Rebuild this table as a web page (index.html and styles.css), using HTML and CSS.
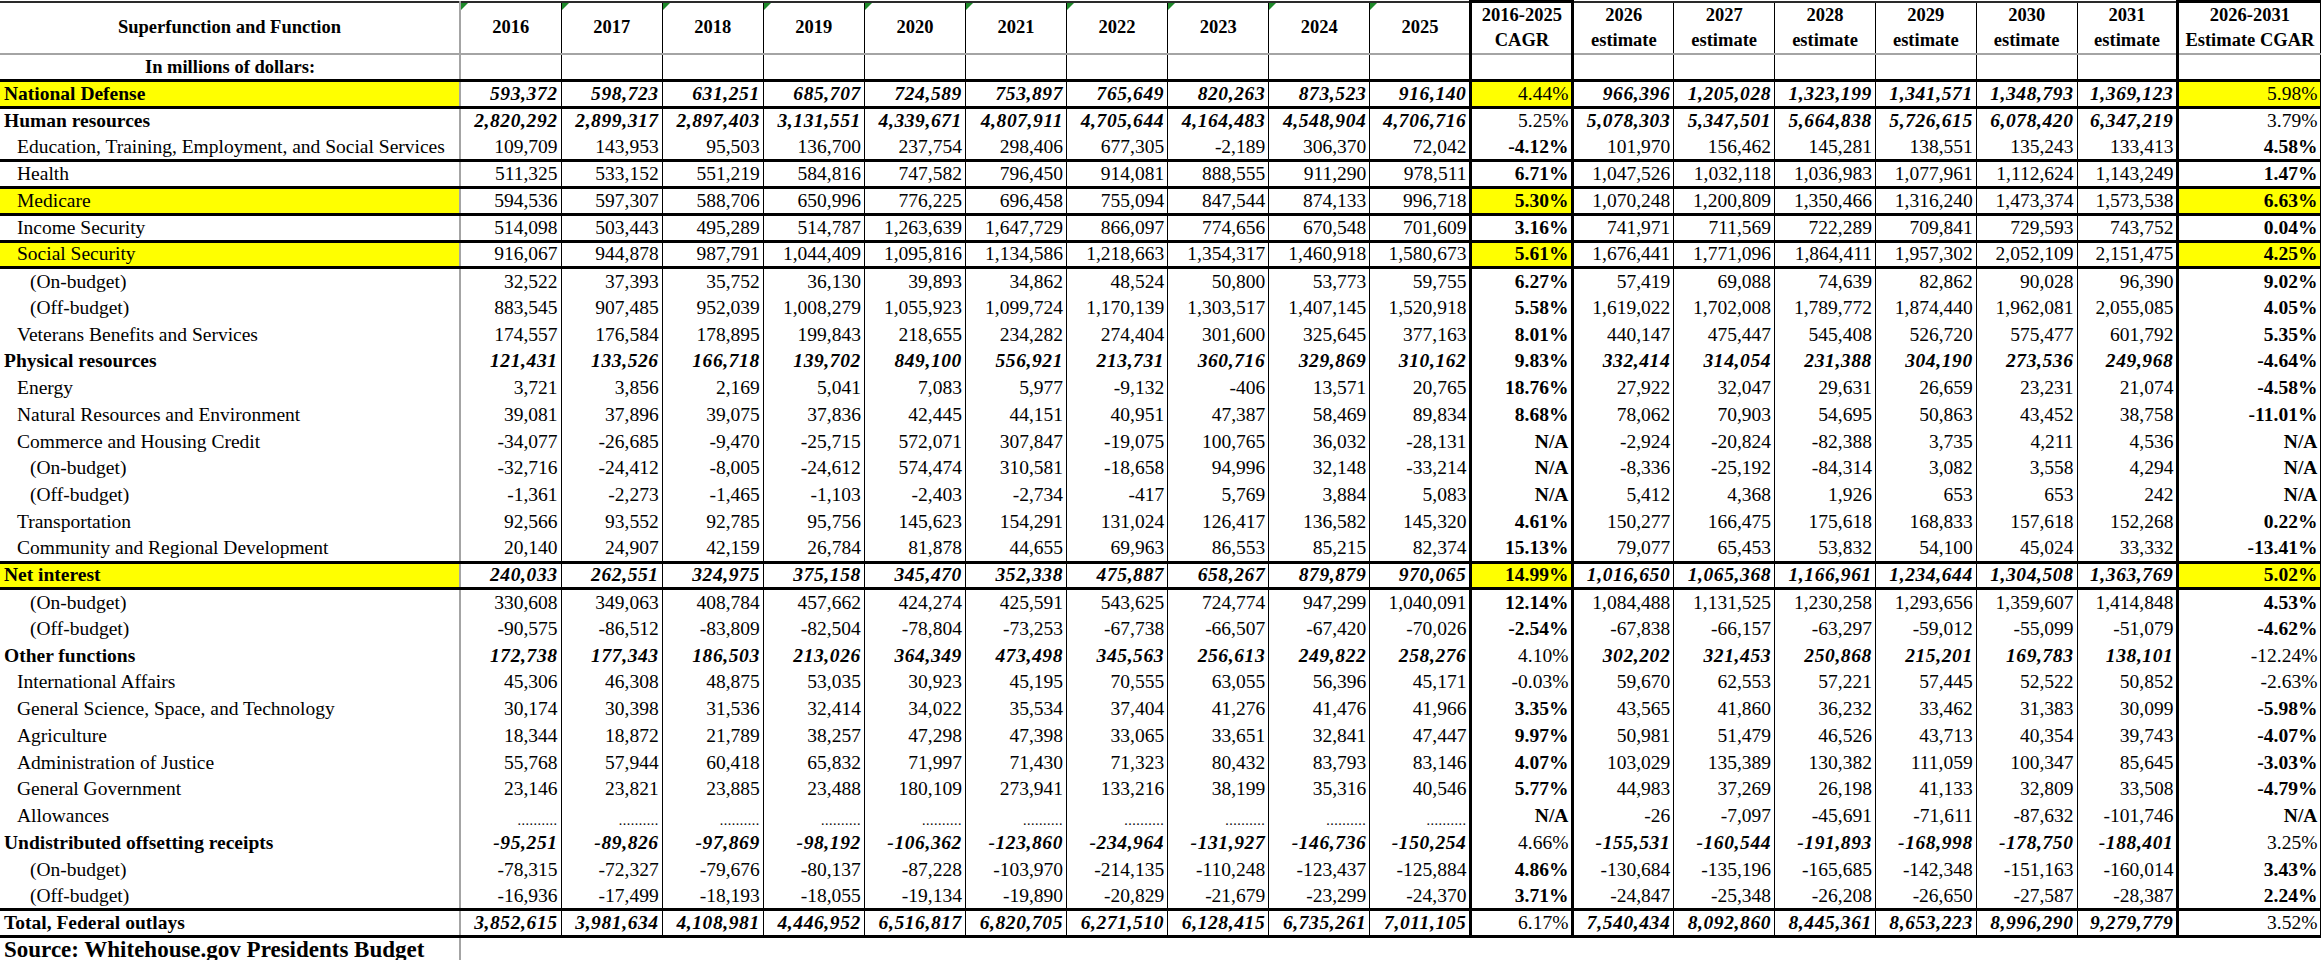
FILE: index.html
```html
<!DOCTYPE html>
<html lang="en">
<head>
<meta charset="utf-8">
<title>Superfunction and Function</title>
<link rel="stylesheet" href="styles.css">
</head>
<body>
<table class="budget">
<colgroup>
<col class="c-lab">
<col class="c-yr"><col class="c-yr"><col class="c-yr"><col class="c-yr"><col class="c-yr"><col class="c-yr"><col class="c-yr"><col class="c-yr"><col class="c-yr"><col class="c-yr">
<col class="c-cg">
<col class="c-es"><col class="c-es"><col class="c-es"><col class="c-es"><col class="c-es"><col class="c-es">
<col class="c-fn">
</colgroup>
<thead>
<tr class="head">
<th class="lab">Superfunction and Function</th>
<th class="yr">2016</th><th class="yr">2017</th><th class="yr">2018</th><th class="yr">2019</th><th class="yr">2020</th><th class="yr">2021</th><th class="yr">2022</th><th class="yr">2023</th><th class="yr">2024</th><th class="yr">2025</th>
<th class="cg">2016-2025<br>CAGR</th>
<th>2026<br>estimate</th><th>2027<br>estimate</th><th>2028<br>estimate</th><th>2029<br>estimate</th><th>2030<br>estimate</th><th>2031<br>estimate</th>
<th class="fn">2026-2031<br>Estimate CGAR</th>
</tr>
<tr class="units">
<th class="lab">In millions of dollars:</th>
<td></td><td></td><td></td><td></td><td></td><td></td><td></td><td></td><td></td><td></td>
<td class="cg"></td>
<td></td><td></td><td></td><td></td><td></td><td></td>
<td class="fn"></td>
</tr>
</thead>
<tbody>
<tr class="sup hl bb plain"><td class="lab">National Defense</td><td>593,372</td><td>598,723</td><td>631,251</td><td>685,707</td><td>724,589</td><td>753,897</td><td>765,649</td><td>820,263</td><td>873,523</td><td>916,140</td><td class="cg">4.44%</td><td>966,396</td><td>1,205,028</td><td>1,323,199</td><td>1,341,571</td><td>1,348,793</td><td>1,369,123</td><td class="fn">5.98%</td></tr>
<tr class="sup plain"><td class="lab">Human resources</td><td>2,820,292</td><td>2,899,317</td><td>2,897,403</td><td>3,131,551</td><td>4,339,671</td><td>4,807,911</td><td>4,705,644</td><td>4,164,483</td><td>4,548,904</td><td>4,706,716</td><td class="cg">5.25%</td><td>5,078,303</td><td>5,347,501</td><td>5,664,838</td><td>5,726,615</td><td>6,078,420</td><td>6,347,219</td><td class="fn">3.79%</td></tr>
<tr class="sub bb"><td class="lab">Education, Training, Employment, and Social Services</td><td>109,709</td><td>143,953</td><td>95,503</td><td>136,700</td><td>237,754</td><td>298,406</td><td>677,305</td><td>-2,189</td><td>306,370</td><td>72,042</td><td class="cg">-4.12%</td><td>101,970</td><td>156,462</td><td>145,281</td><td>138,551</td><td>135,243</td><td>133,413</td><td class="fn">4.58%</td></tr>
<tr class="sub bb"><td class="lab">Health</td><td>511,325</td><td>533,152</td><td>551,219</td><td>584,816</td><td>747,582</td><td>796,450</td><td>914,081</td><td>888,555</td><td>911,290</td><td>978,511</td><td class="cg">6.71%</td><td>1,047,526</td><td>1,032,118</td><td>1,036,983</td><td>1,077,961</td><td>1,112,624</td><td>1,143,249</td><td class="fn">1.47%</td></tr>
<tr class="sub hl bb"><td class="lab">Medicare</td><td>594,536</td><td>597,307</td><td>588,706</td><td>650,996</td><td>776,225</td><td>696,458</td><td>755,094</td><td>847,544</td><td>874,133</td><td>996,718</td><td class="cg">5.30%</td><td>1,070,248</td><td>1,200,809</td><td>1,350,466</td><td>1,316,240</td><td>1,473,374</td><td>1,573,538</td><td class="fn">6.63%</td></tr>
<tr class="sub bb"><td class="lab">Income Security</td><td>514,098</td><td>503,443</td><td>495,289</td><td>514,787</td><td>1,263,639</td><td>1,647,729</td><td>866,097</td><td>774,656</td><td>670,548</td><td>701,609</td><td class="cg">3.16%</td><td>741,971</td><td>711,569</td><td>722,289</td><td>709,841</td><td>729,593</td><td>743,752</td><td class="fn">0.04%</td></tr>
<tr class="sub hl bb"><td class="lab">Social Security</td><td>916,067</td><td>944,878</td><td>987,791</td><td>1,044,409</td><td>1,095,816</td><td>1,134,586</td><td>1,218,663</td><td>1,354,317</td><td>1,460,918</td><td>1,580,673</td><td class="cg">5.61%</td><td>1,676,441</td><td>1,771,096</td><td>1,864,411</td><td>1,957,302</td><td>2,052,109</td><td>2,151,475</td><td class="fn">4.25%</td></tr>
<tr class="sub2"><td class="lab">(On-budget)</td><td>32,522</td><td>37,393</td><td>35,752</td><td>36,130</td><td>39,893</td><td>34,862</td><td>48,524</td><td>50,800</td><td>53,773</td><td>59,755</td><td class="cg">6.27%</td><td>57,419</td><td>69,088</td><td>74,639</td><td>82,862</td><td>90,028</td><td>96,390</td><td class="fn">9.02%</td></tr>
<tr class="sub2"><td class="lab">(Off-budget)</td><td>883,545</td><td>907,485</td><td>952,039</td><td>1,008,279</td><td>1,055,923</td><td>1,099,724</td><td>1,170,139</td><td>1,303,517</td><td>1,407,145</td><td>1,520,918</td><td class="cg">5.58%</td><td>1,619,022</td><td>1,702,008</td><td>1,789,772</td><td>1,874,440</td><td>1,962,081</td><td>2,055,085</td><td class="fn">4.05%</td></tr>
<tr class="sub"><td class="lab">Veterans Benefits and Services</td><td>174,557</td><td>176,584</td><td>178,895</td><td>199,843</td><td>218,655</td><td>234,282</td><td>274,404</td><td>301,600</td><td>325,645</td><td>377,163</td><td class="cg">8.01%</td><td>440,147</td><td>475,447</td><td>545,408</td><td>526,720</td><td>575,477</td><td>601,792</td><td class="fn">5.35%</td></tr>
<tr class="sup"><td class="lab">Physical resources</td><td>121,431</td><td>133,526</td><td>166,718</td><td>139,702</td><td>849,100</td><td>556,921</td><td>213,731</td><td>360,716</td><td>329,869</td><td>310,162</td><td class="cg">9.83%</td><td>332,414</td><td>314,054</td><td>231,388</td><td>304,190</td><td>273,536</td><td>249,968</td><td class="fn">-4.64%</td></tr>
<tr class="sub"><td class="lab">Energy</td><td>3,721</td><td>3,856</td><td>2,169</td><td>5,041</td><td>7,083</td><td>5,977</td><td>-9,132</td><td>-406</td><td>13,571</td><td>20,765</td><td class="cg">18.76%</td><td>27,922</td><td>32,047</td><td>29,631</td><td>26,659</td><td>23,231</td><td>21,074</td><td class="fn">-4.58%</td></tr>
<tr class="sub"><td class="lab">Natural Resources and Environment</td><td>39,081</td><td>37,896</td><td>39,075</td><td>37,836</td><td>42,445</td><td>44,151</td><td>40,951</td><td>47,387</td><td>58,469</td><td>89,834</td><td class="cg">8.68%</td><td>78,062</td><td>70,903</td><td>54,695</td><td>50,863</td><td>43,452</td><td>38,758</td><td class="fn">-11.01%</td></tr>
<tr class="sub"><td class="lab">Commerce and Housing Credit</td><td>-34,077</td><td>-26,685</td><td>-9,470</td><td>-25,715</td><td>572,071</td><td>307,847</td><td>-19,075</td><td>100,765</td><td>36,032</td><td>-28,131</td><td class="cg">N/A</td><td>-2,924</td><td>-20,824</td><td>-82,388</td><td>3,735</td><td>4,211</td><td>4,536</td><td class="fn">N/A</td></tr>
<tr class="sub2"><td class="lab">(On-budget)</td><td>-32,716</td><td>-24,412</td><td>-8,005</td><td>-24,612</td><td>574,474</td><td>310,581</td><td>-18,658</td><td>94,996</td><td>32,148</td><td>-33,214</td><td class="cg">N/A</td><td>-8,336</td><td>-25,192</td><td>-84,314</td><td>3,082</td><td>3,558</td><td>4,294</td><td class="fn">N/A</td></tr>
<tr class="sub2"><td class="lab">(Off-budget)</td><td>-1,361</td><td>-2,273</td><td>-1,465</td><td>-1,103</td><td>-2,403</td><td>-2,734</td><td>-417</td><td>5,769</td><td>3,884</td><td>5,083</td><td class="cg">N/A</td><td>5,412</td><td>4,368</td><td>1,926</td><td>653</td><td>653</td><td>242</td><td class="fn">N/A</td></tr>
<tr class="sub"><td class="lab">Transportation</td><td>92,566</td><td>93,552</td><td>92,785</td><td>95,756</td><td>145,623</td><td>154,291</td><td>131,024</td><td>126,417</td><td>136,582</td><td>145,320</td><td class="cg">4.61%</td><td>150,277</td><td>166,475</td><td>175,618</td><td>168,833</td><td>157,618</td><td>152,268</td><td class="fn">0.22%</td></tr>
<tr class="sub bb"><td class="lab">Community and Regional Development</td><td>20,140</td><td>24,907</td><td>42,159</td><td>26,784</td><td>81,878</td><td>44,655</td><td>69,963</td><td>86,553</td><td>85,215</td><td>82,374</td><td class="cg">15.13%</td><td>79,077</td><td>65,453</td><td>53,832</td><td>54,100</td><td>45,024</td><td>33,332</td><td class="fn">-13.41%</td></tr>
<tr class="sup hl bb"><td class="lab">Net interest</td><td>240,033</td><td>262,551</td><td>324,975</td><td>375,158</td><td>345,470</td><td>352,338</td><td>475,887</td><td>658,267</td><td>879,879</td><td>970,065</td><td class="cg">14.99%</td><td>1,016,650</td><td>1,065,368</td><td>1,166,961</td><td>1,234,644</td><td>1,304,508</td><td>1,363,769</td><td class="fn">5.02%</td></tr>
<tr class="sub2"><td class="lab">(On-budget)</td><td>330,608</td><td>349,063</td><td>408,784</td><td>457,662</td><td>424,274</td><td>425,591</td><td>543,625</td><td>724,774</td><td>947,299</td><td>1,040,091</td><td class="cg">12.14%</td><td>1,084,488</td><td>1,131,525</td><td>1,230,258</td><td>1,293,656</td><td>1,359,607</td><td>1,414,848</td><td class="fn">4.53%</td></tr>
<tr class="sub2"><td class="lab">(Off-budget)</td><td>-90,575</td><td>-86,512</td><td>-83,809</td><td>-82,504</td><td>-78,804</td><td>-73,253</td><td>-67,738</td><td>-66,507</td><td>-67,420</td><td>-70,026</td><td class="cg">-2.54%</td><td>-67,838</td><td>-66,157</td><td>-63,297</td><td>-59,012</td><td>-55,099</td><td>-51,079</td><td class="fn">-4.62%</td></tr>
<tr class="sup plain"><td class="lab">Other functions</td><td>172,738</td><td>177,343</td><td>186,503</td><td>213,026</td><td>364,349</td><td>473,498</td><td>345,563</td><td>256,613</td><td>249,822</td><td>258,276</td><td class="cg">4.10%</td><td>302,202</td><td>321,453</td><td>250,868</td><td>215,201</td><td>169,783</td><td>138,101</td><td class="fn">-12.24%</td></tr>
<tr class="sub"><td class="lab">International Affairs</td><td>45,306</td><td>46,308</td><td>48,875</td><td>53,035</td><td>30,923</td><td>45,195</td><td>70,555</td><td>63,055</td><td>56,396</td><td>45,171</td><td class="cg thin">-0.03%</td><td>59,670</td><td>62,553</td><td>57,221</td><td>57,445</td><td>52,522</td><td>50,852</td><td class="fn thin">-2.63%</td></tr>
<tr class="sub"><td class="lab">General Science, Space, and Technology</td><td>30,174</td><td>30,398</td><td>31,536</td><td>32,414</td><td>34,022</td><td>35,534</td><td>37,404</td><td>41,276</td><td>41,476</td><td>41,966</td><td class="cg">3.35%</td><td>43,565</td><td>41,860</td><td>36,232</td><td>33,462</td><td>31,383</td><td>30,099</td><td class="fn">-5.98%</td></tr>
<tr class="sub"><td class="lab">Agriculture</td><td>18,344</td><td>18,872</td><td>21,789</td><td>38,257</td><td>47,298</td><td>47,398</td><td>33,065</td><td>33,651</td><td>32,841</td><td>47,447</td><td class="cg">9.97%</td><td>50,981</td><td>51,479</td><td>46,526</td><td>43,713</td><td>40,354</td><td>39,743</td><td class="fn">-4.07%</td></tr>
<tr class="sub"><td class="lab">Administration of Justice</td><td>55,768</td><td>57,944</td><td>60,418</td><td>65,832</td><td>71,997</td><td>71,430</td><td>71,323</td><td>80,432</td><td>83,793</td><td>83,146</td><td class="cg">4.07%</td><td>103,029</td><td>135,389</td><td>130,382</td><td>111,059</td><td>100,347</td><td>85,645</td><td class="fn">-3.03%</td></tr>
<tr class="sub"><td class="lab">General Government</td><td>23,146</td><td>23,821</td><td>23,885</td><td>23,488</td><td>180,109</td><td>273,941</td><td>133,216</td><td>38,199</td><td>35,316</td><td>40,546</td><td class="cg">5.77%</td><td>44,983</td><td>37,269</td><td>26,198</td><td>41,133</td><td>32,809</td><td>33,508</td><td class="fn">-4.79%</td></tr>
<tr class="sub allow"><td class="lab">Allowances</td><td class="dots">..........</td><td class="dots">..........</td><td class="dots">..........</td><td class="dots">..........</td><td class="dots">..........</td><td class="dots">..........</td><td class="dots">..........</td><td class="dots">..........</td><td class="dots">..........</td><td class="dots">..........</td><td class="cg">N/A</td><td>-26</td><td>-7,097</td><td>-45,691</td><td>-71,611</td><td>-87,632</td><td>-101,746</td><td class="fn">N/A</td></tr>
<tr class="sup plain"><td class="lab">Undistributed offsetting receipts</td><td>-95,251</td><td>-89,826</td><td>-97,869</td><td>-98,192</td><td>-106,362</td><td>-123,860</td><td>-234,964</td><td>-131,927</td><td>-146,736</td><td>-150,254</td><td class="cg">4.66%</td><td>-155,531</td><td>-160,544</td><td>-191,893</td><td>-168,998</td><td>-178,750</td><td>-188,401</td><td class="fn">3.25%</td></tr>
<tr class="sub2"><td class="lab">(On-budget)</td><td>-78,315</td><td>-72,327</td><td>-79,676</td><td>-80,137</td><td>-87,228</td><td>-103,970</td><td>-214,135</td><td>-110,248</td><td>-123,437</td><td>-125,884</td><td class="cg">4.86%</td><td>-130,684</td><td>-135,196</td><td>-165,685</td><td>-142,348</td><td>-151,163</td><td>-160,014</td><td class="fn">3.43%</td></tr>
<tr class="sub2 bb"><td class="lab">(Off-budget)</td><td>-16,936</td><td>-17,499</td><td>-18,193</td><td>-18,055</td><td>-19,134</td><td>-19,890</td><td>-20,829</td><td>-21,679</td><td>-23,299</td><td>-24,370</td><td class="cg">3.71%</td><td>-24,847</td><td>-25,348</td><td>-26,208</td><td>-26,650</td><td>-27,587</td><td>-28,387</td><td class="fn">2.24%</td></tr>
<tr class="sup plain bb"><td class="lab">Total, Federal outlays</td><td>3,852,615</td><td>3,981,634</td><td>4,108,981</td><td>4,446,952</td><td>6,516,817</td><td>6,820,705</td><td>6,271,510</td><td>6,128,415</td><td>6,735,261</td><td>7,011,105</td><td class="cg">6.17%</td><td>7,540,434</td><td>8,092,860</td><td>8,445,361</td><td>8,653,223</td><td>8,996,290</td><td>9,279,779</td><td class="fn">3.52%</td></tr>
</tbody>
<tfoot>
<tr class="src"><td class="lab">Source: Whitehouse.gov Presidents Budget</td><td class="blank" colspan="18"></td></tr>
</tfoot>
</table>
</body>
</html>
```

FILE: styles.css
```css
html, body {
  margin: 0;
  padding: 0;
  background: #ffffff;
  overflow: hidden;
}

body {
  font-family: "Liberation Serif", "Times New Roman", serif;
  color: #000000;
}

.budget {
  border-collapse: collapse;
  table-layout: fixed;
  width: 2321px;
  font-size: 19.5px;
}

.c-lab { width: 460px; }
.c-yr { width: 101.1px; }
.c-cg { width: 102px; }
.c-es { width: 100.83px; }
.c-fn { width: 143px; }

.budget th,
.budget td {
  padding: 0 3px 0 4px;
  white-space: nowrap;
  overflow: hidden;
  line-height: 20px;
  vertical-align: middle;
}

.budget td {
  text-align: right;
  border-left: 1px solid #000000;
  border-right: 1px solid #000000;
}

.budget .lab {
  text-align: left;
  border-left: none;
  border-right: 2px solid #a4a4a4;
}

/* header */
.head th {
  height: 49px;
  padding: 0;
  font-size: 18.5px;
  font-weight: bold;
  text-align: center;
  line-height: 25px;
  border-top: 2px solid #2a2a2a;
  border-bottom: 2px solid #a4a4a4;
  border-left: 1px solid #000000;
  border-right: 1px solid #000000;
  position: relative;
}

.head th.lab {
  text-align: center;
  border-left: none;
  border-right: 2px solid #a4a4a4;
}

.head th.yr::before {
  content: "";
  position: absolute;
  top: 0;
  left: 0;
  border-top: 7px solid #1e8a2a;
  border-right: 7px solid transparent;
}

.units th,
.units td {
  height: 24px;
  border-bottom: 3px solid #000000;
}

.units th.lab {
  text-align: center;
  font-size: 18.5px;
  font-weight: bold;
}

.budget .cg {
  border-left: 3px solid #000000;
  border-right: 3px solid #000000;
}

.budget .fn {
  border-left: 3px solid #000000;
  border-right: 1px solid #000000;
}

.head th.cg,
.head th.fn {
  border-top: 3px solid #000000;
}

/* body rows */
tbody tr {
  height: 26.75px;
}

tr.bb td {
  border-bottom: 3px solid #000000;
}

tr.sup td {
  font-weight: bold;
  font-style: italic;
  letter-spacing: 0.6px;
}

tr.sup td.lab {
  font-style: normal;
  letter-spacing: 0;
}

.budget td.cg,
.budget td.fn {
  font-weight: bold;
  font-style: normal;
  letter-spacing: 0;
}

.budget tr.plain td.cg,
.budget tr.plain td.fn,
.budget td.thin {
  font-weight: normal;
}

tr.hl td.lab,
tr.hl td.cg,
tr.hl td.fn {
  background: #ffff00;
}

tr.sup td.lab {
  padding-left: 4px;
}

tr.sub td.lab {
  padding-left: 17px;
}

tr.sub2 td.lab {
  padding-left: 30px;
}

td.dots {
  vertical-align: bottom;
  font-size: 14px;
  letter-spacing: 0.5px;
  line-height: 18px;
}

/* source */
.src td {
  height: 24px;
}

.src td.lab {
  font-size: 23px;
  font-weight: bold;
  line-height: 24px;
  padding-left: 4px;
  overflow: visible;
}

.src td.blank {
  border: none;
}
```
